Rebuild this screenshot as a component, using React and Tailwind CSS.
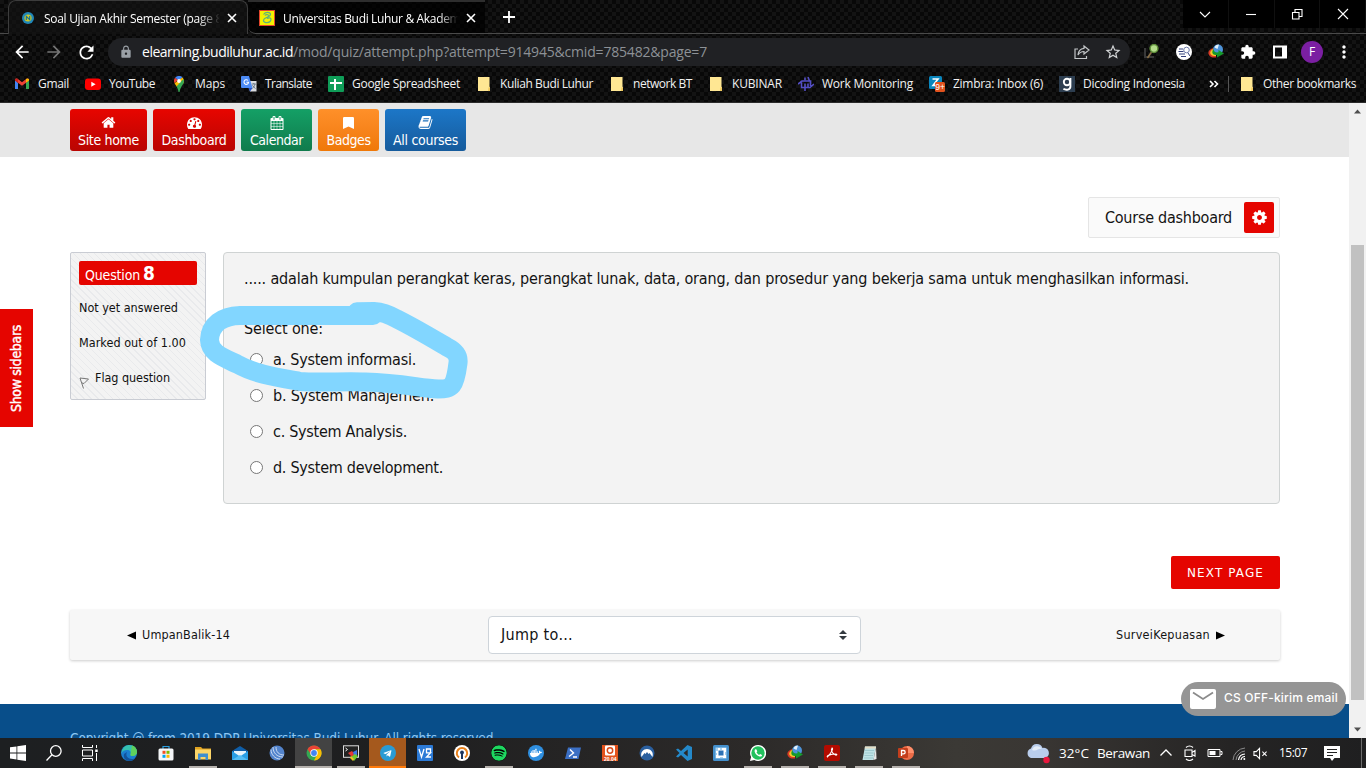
import React, { useLayoutEffect, useRef } from "react";
import { FaBookmark, FaSpotify, FaDocker, FaWhatsapp, FaTelegramPlane } from "react-icons/fa";
import { MdArrowBack, MdArrowForward, MdRefresh, MdLock, MdStarBorder, MdExtension, MdMoreVert } from "react-icons/md";

/* Single-line text whose letter spacing is adjusted so that it spans `w` pixels. */
function Fit({ w, className = "", children }) {
  const ref = useRef(null);
  useLayoutEffect(() => {
    const el = ref.current;
    el.style.letterSpacing = "0px";
    const natural = parseFloat(getComputedStyle(el).width);
    el.style.letterSpacing = `${(w - natural) / el.textContent.length}px`;
  }, [w, children]);
  return (
    <span ref={ref} className={`inline-block shrink-0 whitespace-pre ${className}`}>
      {children}
    </span>
  );
}

const UI = "font-['Open_Sans','Noto_Sans',sans-serif]";
const PAGE = "font-['DejaVu_Sans_Condensed','DejaVu_Sans',sans-serif] [font-stretch:condensed]";

/* ---------- favicons ---------- */
const Svg = ({ s = 16, vb = "0 0 16 16", className = "", children }) => (
  <svg width={s} height={s} viewBox={vb} className={`shrink-0 ${className}`} fill="none">
    {children}
  </svg>
);

const Gmail = () => (
  <Svg>
    <path d="M1 4v9h3V7z" fill="#4285f4" />
    <path d="M12 7v6h3V4z" fill="#34a853" />
    <path d="M1 4.500L8 9.800l7-5.300V3.200c-.6-1-1.800-1-2.600-.4L8 6.200 3.600 2.800C2.800 2.200 1.600 2.200 1 3.200z" fill="#ea4335" />
    <path d="M12 3.100v3.700l3-2.200V3.300c-.8-1.100-2-1.100-3-.2z" fill="#fbbc04" />
    <path d="M1 3.300v1.300l3 2.200V3.100c-1-.9-2.200-.9-3 .2z" fill="#c5221f" />
  </Svg>
);
const YouTube = () => (
  <Svg>
    <rect x="0" y="2.500" width="16" height="11.500" rx="3" fill="#f00" />
    <path d="M6.300 5.800v5l4.300-2.500z" fill="#fff" />
  </Svg>
);
const Maps = () => (
  <Svg>
    <path d="M4.200 1.800L8 5l3.500-3.800A5 5 0 0 0 4.200 1.800z" fill="#4285f4" />
    <path d="M4.200 1.800A5 5 0 0 0 3.500 7.200L7 4z" fill="#ea4335" />
    <path d="M3.500 7.200L11.500 1.400A5 5 0 0 1 13 5c0 1-.3 1.700-.6 2.400L6 11z" fill="#fbbc04" />
    <path d="M12.400 3c1 2.200.5 4-.8 5.700C10 11 9 13 8.500 16h-1C7.200 13.500 6.500 12 5.500 10.500z" fill="#34a853" />
    <circle cx="8" cy="5" r="1.900" fill="#fff" />
  </Svg>
);
const Translate = () => (
  <Svg>
    <path d="M6 5h9.500v10.500H9z" fill="#dadce0" />
    <path d="M0 1a1 1 0 0 1 1-1h7l3.500 12H1a1 1 0 0 1-1-1z" fill="#4c8bf5" />
    <path d="M7.500 12h4l-2.500 3.500z" fill="#2a56c6" />
    <path d="M7 4.500a2.300 2.300 0 1 0 .6 1.800H5.400" stroke="#fff" strokeWidth="1.100" />
    <path d="M10.800 8h4M12.800 7v1M14 8c-.4 2-1.500 3.500-2.500 4.300M11.500 9.300c.8 1.500 1.800 2.500 3 3.200" stroke="#5f6f80" strokeWidth=".9" />
  </Svg>
);
const Sheet = () => (
  <Svg>
    <rect width="16" height="16" rx="1" fill="#0f9d58" />
    <path d="M2 7h12M7 3v11" stroke="#fff" strokeWidth="2" />
  </Svg>
);
const Folder = () => (
  <Svg>
    <path d="M2 1h11.500v9.500l.5 1V15H2z" fill="#ffe793" />
    <path d="M12.500 11.500h1.500V15h-2z" fill="#efc85c" />
  </Svg>
);
const Work = () => (
  <Svg>
    <path d="M0 8l4-3h8.500v5M16 8l-4 3.500H3.500V6.500" stroke="#544fc5" strokeWidth="1.600" />
    <path d="M7 1.500v3M7 7.500V15M10 1l1.500 4M10 7.500v4" stroke="#544fc5" strokeWidth="1.600" />
  </Svg>
);
const Zimbra = () => (
  <Svg>
    <rect width="13" height="13" rx="1.500" fill="#0a86bd" />
    <path d="M3.500 3h5.500L4 9.500h3" stroke="#fff" strokeWidth="1.600" />
    <rect x="6" y="6" width="10" height="10" rx="1.500" fill="#e2521d" />
    <text x="6.200" y="14" fontSize="8.500" fontFamily="Liberation Sans" fill="#fff">9+</text>
  </Svg>
);
const Dicoding = () => (
  <Svg>
    <rect width="16" height="16" fill="#2d3e50" />
    <circle cx="8" cy="6" r="3.200" stroke="#fff" strokeWidth="1.900" />
    <path d="M11.400 2v8.500c0 3.500-4.500 4-7 2.300" stroke="#fff" strokeWidth="1.900" />
  </Svg>
);

const bookmarks = [
  [Gmail, "Gmail", 31],
  [YouTube, "YouTube", 46],
  [Maps, "Maps", 30],
  [Translate, "Translate", 47],
  [Sheet, "Google Spreadsheet", 108],
  [Folder, "Kuliah Budi Luhur", 93],
  [Folder, "network BT", 59],
  [Folder, "KUBINAR", 50],
  [Work, "Work Monitoring", 91],
  [Zimbra, "Zimbra: Inbox (6)", 90],
  [Dicoding, "Dicoding Indonesia", 102],
];

const Cross = ({ className = "" }) => (
  <Svg s={10} vb="0 0 10 10" className={className}>
    <path d="M1 1l8 8M9 1L1 9" stroke="#fff" strokeWidth="1.600" />
  </Svg>
);

const Idm = () => (
  <Svg>
    <circle cx="10" cy="5.500" r="5" fill="#4d93d9" />
    <path d="M6.500 3.500a4.500 4.500 0 0 1 4.500-3L9.500 5z" fill="#e4f1fb" />
    <path d="M5.500 4C1 5.500 0 8 .5 10c.8 2.800 4 4 7.500 3.500V11C4 11 2.500 8 5.500 4z" fill="#d83a25" />
    <path d="M5.500 4.500C2.500 6.500 1.500 8.500 2.500 10c1 1.700 3 2 5.500 2V9.500C5.500 9.500 4.500 7.500 5.500 4.500z" fill="#f5c928" />
    <path d="M5.500 5C4 7 4 9 5 10c.8.8 2 1 4 1v2.500L16 9.500 10.500 6v2.300C7.500 8.800 5.500 7.500 5.500 5z" fill="#159a2c" />
  </Svg>
);

function TabStrip() {
  return (
    <div className="flex h-[34px] items-stretch">
      <div className="w-2 border-b border-[#4a4a4a]" />
      <div className="flex w-[240px] items-center rounded-t-lg border border-b-0 border-[#3c3c3c] bg-[#141414]/60 pl-[13px]">
        <Svg s={12} vb="0 0 12 12">
          <circle cx="6" cy="6" r="6" fill="#2087b8" />
          <circle cx="6" cy="6" r="3.600" fill="#c9c72c" />
          <path d="M4.300 8V4.300l3.400 3.400V4" stroke="#147297" strokeWidth="1.100" />
        </Svg>
        <div className="-mt-px ml-[10px] w-[175px] overflow-hidden text-white [mask-image:linear-gradient(90deg,#000_88%,transparent_101%)]">
          <Fit w={178} className="text-xs">Soal Ujian Akhir Semester (page 8</Fit>
        </div>
        <Cross className="ml-[8px]" />
      </div>
      <div className="flex w-[237px] items-center rounded-bl-lg border-b border-t-2 border-[#4a4a4a] border-t-[#2e2e2e] bg-black/70 pl-[11px]">
        <Svg>
          <rect x=".5" y=".5" width="15" height="15" fill="#f4f200" stroke="#e2452c" />
          <path d="M4.500 4.500c2-3 7-2.500 7 0s-6.500 3-7 5.500 4.500 4 7 1c1.500-3-1-4-3.500-2.500M6 5.500c1-1.500 4-1 3.500.5" stroke="#5fb27a" strokeWidth="1.200" />
        </Svg>
        <div className="-mt-px ml-2 w-[175px] overflow-hidden text-white [mask-image:linear-gradient(90deg,#000_89%,transparent_100%)]">
          <Fit w={180} className="text-xs">Universitas Budi Luhur &amp; Akademi</Fit>
        </div>
        <Cross className="ml-[8px]" />
      </div>
      <div className="flex grow items-center border-b border-[#4a4a4a] pl-[18px]">
        <Svg s={12} vb="0 0 12 12">
          <path d="M6 0v12M0 6h12" stroke="#fff" strokeWidth="1.800" />
        </Svg>
      </div>
      <div className="flex w-[183px] border-b border-[#4a4a4a]">
        <div className="mb-[5px] flex grow bg-black">
          {[
            <path key="a" d="M1 4l5 5 5-5" />,
            <path key="b" d="M1 6.500h10" />,
            <path key="c" d="M1.500 4.500h6.500v6.500H1.500zM4 4V1.500h7V8.500H8.500" />,
            <path key="d" d="M1 1l10 10M11 1L1 11" />,
          ].map((p, i) => (
            <div key={i} className="flex flex-1 items-center justify-center border-r border-[#101010]">
              <Svg s={12} vb="0 0 12 12"><g stroke="#fff" strokeWidth="1.100">{p}</g></Svg>
            </div>
          ))}
        </div>
      </div>
    </div>
  );
}

function Toolbar() {
  return (
    <div className="flex h-9 items-center pl-[12px] text-white">
      <MdArrowBack className="size-5" />
      <MdArrowForward className="ml-3 size-5 text-[#757575]" />
      <MdRefresh className="ml-3 size-[21px]" />
      <div className="ml-[11px] flex h-7 w-[1022px] items-center rounded-full bg-[#202124] pl-[11px] pr-2">
        <MdLock className="size-[14px] text-[#9aa0a6]" />
        <Fit w={151} className="-mt-px ml-[9px] text-[14px]">elearning.budiluhur.ac.id</Fit>
        <Fit w={414} className="-mt-px text-[14px] text-[#8d9196]">/mod/quiz/attempt.php?attempt=914945&amp;cmid=785482&amp;page=7</Fit>
        <div className="grow" />
        <Svg className="mr-[14px]">
          <path d="M4 5H1v9.500h11.500V12M10 2l5 4-5 4V7.500C7 7.500 5.500 8.500 4 11c.3-4 2.500-6.300 6-6.700z" stroke="#c4c7c9" strokeWidth="1.200" />
        </Svg>
        <MdStarBorder className="size-[18px] text-[#d2d4d6]" />
      </div>
      <div className="ml-[14px] flex items-center gap-4">
        <Svg>
          <path d="M1 4v9h9" stroke="#393939" strokeWidth="2" />
          <path d="M3.500 14L7.500 8" stroke="#8a6f45" strokeWidth="1.600" />
          <circle cx="10" cy="4.500" r="3.900" fill="#b4dc8b" stroke="#5f8f3a" strokeWidth="1.500" />
        </Svg>
        <Svg>
          <circle cx="8" cy="8" r="8" fill="#fff" />
          <path d="M3 5h4M2.500 7.500h5M3 10h6M5 12.500h5" stroke="#33407a" strokeWidth="1.200" />
          <circle cx="10.500" cy="6" r="2.800" stroke="#6d7aa8" />
          <path d="M12 9l2 3" stroke="#33407a" />
        </Svg>
        <Idm />
        <MdExtension className="size-4" />
        <Svg>
          <path d="M2 2.500h12v11H2z" stroke="#fff" strokeWidth="2" />
          <path d="M10 2h4v12h-4z" fill="#fff" />
        </Svg>
      </div>
      <div className="ml-[13px] flex size-[22px] items-center justify-center rounded-full bg-[#7b1fa2] text-xs">F</div>
      <MdMoreVert className="ml-[11px] size-5" />
    </div>
  );
}

function Bookmarks() {
  return (
    <div className="flex h-[33px] items-center pb-[5px] pl-[14px] text-xs text-[#f1f1f1]">
      <div className="flex gap-4">
        {bookmarks.map(([Icon, label, w]) => (
          <div key={label} className="flex items-center gap-2">
            <Icon />
            <Fit w={w}>{label}</Fit>
          </div>
        ))}
      </div>
      <Svg s={10} vb="0 0 10 10" className="ml-[24px]">
        <path d="M1 2l3 3-3 3M5.500 2l3 3-3 3" stroke="#fff" strokeWidth="1.600" />
      </Svg>
      <div className="ml-[9px] h-4 w-px bg-[#555]" />
      <div className="ml-[10px] flex items-center gap-2">
        <Folder />
        <Fit w={93}>Other bookmarks</Fit>
      </div>
    </div>
  );
}

/* ---------- page ---------- */
const HOME = "M1472 992v480q0 26-19 45t-45 19h-384v-384h-256v384h-384q-26 0-45-19t-19-45v-480q0-1 .5-3t.5-3l575-474 575 474q1 2 1 6zm223-69l-62 74q-8 9-21 11h-3q-13 0-21-7l-692-577-692 577q-12 8-24 7-13-2-21-11l-62-74q-8-10-7-23.500t11-21.500l719-599q32-26 76-26t76 26l244 204v-195q0-14 9-23t23-9h192q14 0 23 9t9 23v408l219 182q10 8 11 21.500t-7 23.500z";
const DASH = "M384 1152q0-53-37.500-90.500t-90.500-37.500-90.500 37.500-37.500 90.500 37.500 90.500 90.500 37.500 90.500-37.500 37.500-90.500zm192-448q0-53-37.500-90.500t-90.500-37.500-90.500 37.500-37.500 90.500 37.500 90.500 90.500 37.500 90.500-37.500 37.500-90.500zm428 481l101-382q6-26-7.500-48.500t-38.500-29.500-48 6.500-30 39.500l-101 382q-60 5-107 43.500t-63 98.500q-20 77 20 146t117 89 146-20 89-117q16-60-6-117t-72-91zm660-33q0-53-37.500-90.500t-90.500-37.500-90.500 37.500-37.500 90.500 37.500 90.500 90.500 37.500 90.500-37.500 37.500-90.500zm-640-640q0-53-37.500-90.500t-90.500-37.500-90.500 37.500-37.500 90.500 37.500 90.500 90.500 37.500 90.500-37.500 37.500-90.500zm448 192q0-53-37.500-90.500t-90.500-37.500-90.500 37.500-37.500 90.500 37.500 90.500 90.500 37.500 90.500-37.500 37.500-90.500zm320 448q0 261-141 483-19 29-54 29h-1402q-35 0-54-29-141-221-141-483 0-182 71-348t191-286 286-191 348-71 348 71 286 191 191 286 71 348z";
const CAL = "M192 1664h288v-288h-288v288zm352 0h320v-288h-320v288zm-352-352h288v-320h-288v320zm352 0h320v-320h-320v320zm-352-384h288v-288h-288v288zm736 736h320v-288h-320v288zm-384-736h320v-288h-320v288zm768 736h288v-288h-288v288zm-384-352h320v-320h-320v320zm-352-864v-288q0-13-9.500-22.500t-22.500-9.500h-64q-13 0-22.500 9.500t-9.500 22.500v288q0 13 9.500 22.500t22.500 9.500h64q13 0 22.500-9.500t9.500-22.500zm736 864h288v-320h-288v320zm-384-384h320v-288h-320v288zm384 0h288v-288h-288v288zm32-480v-288q0-13-9.500-22.500t-22.500-9.500h-64q-13 0-22.500 9.500t-9.500 22.500v288q0 13 9.500 22.500t22.500 9.500h64q13 0 22.500-9.500t9.500-22.500zm384-64v1280q0 52-38 90t-90 38h-1408q-52 0-90-38t-38-90v-1280q0-52 38-90t90-38h128v-96q0-66 47-113t113-47h64q66 0 113 47t47 113v96h384v-96q0-66 47-113t113-47h64q66 0 113 47t47 113v96h128q52 0 90 38t38 90z";
const BOOK = "M1703 478q40 57 18 129l-275 906q-19 64-76.500 107.500t-122.500 43.500h-923q-77 0-148.500-53.500t-99.500-131.500q-24-67-2-127 0-4 3-27t4-37q1-8-3-21.500t-3-19.500q2-11 8-21t16.500-23.500 16.500-23.500q23-38 45-91.500t30-91.500q3-10 .5-30t-.5-28q3-11 17-28t17-23q21-36 42-92t25-90q1-9-2.500-32t.5-28q4-13 22-30.500t22-22.500q19-26 42.500-84.500t27.500-96.500q1-8-3-25.500t-2-26.500q2-8 9-18t18-23 17-21q8-12 16.500-30.500t15-35 16-36 19.500-32 26.500-23.500 36-11.500 47.500 5.500l-1 3q38-9 51-9h761q74 0 114 56t18 130l-274 906q-36 119-71.500 153.500t-128.500 34.500h-869q-27 0-38 15-11 16-1 43 24 70 144 70h923q29 0 56-15.500t35-41.500l300-987q7-22 5-57 38 15 59 43zm-1064 2q-4 13 2 22.500t20 9.500h608q13 0 25.500-9.500t16.500-22.500l21-64q4-13-2-22.500t-20-9.500h-608q-13 0-25.500 9.500t-16.500 22.500zm-83 256q-4 13 2 22.500t20 9.500h608q13 0 25.500-9.500t16.500-22.500l21-64q4-13-2-22.500t-20-9.500h-608q-13 0-25.500 9.500t-16.500 22.500z";
const COG = "M1152 896q0-106-75-181t-181-75-181 75-75 181 75 181 181 75 181-75 75-181zm512-109v222q0 12-8 23t-20 13l-185 28q-19 54-39 91 35 50 107 138 10 12 10 25t-9 23q-27 37-99 108t-94 71q-12 0-26-9l-138-108q-44 23-91 38-16 136-29 186-7 28-36 28h-222q-14 0-24.500-8.500t-11.500-21.500l-28-184q-49-16-90-37l-141 107q-10 9-25 9-14 0-25-11-126-114-165-168-7-10-7-23 0-12 8-23 15-21 51-66.500t54-70.500q-27-50-41-99l-183-27q-13-2-21-12.500t-8-23.500v-222q0-12 8-23t19-13l186-28q14-46 39-92-40-57-107-138-10-12-10-24 0-10 9-23 26-36 98.500-107.500t94.500-71.500q13 0 26 10l138 107q44-23 91-38 16-136 29-186 7-28 36-28h222q14 0 24.500 8.500t11.500 21.500l28 184q49 16 90 37l142-107q9-9 24-9 13 0 25 10 129 119 165 170 7 8 7 22 0 12-8 23-15 21-51 66.500t-54 70.500q26 50 41 98l183 28q13 2 21 12.500t8 23.500z";

const Glyph = ({ d, s = 16 }) => (
  <svg width={s} height={s} viewBox="0 0 1792 1792" fill="currentColor"><path d={d} /></svg>
);

const navButtons = [
  ["Site home", 61, "w-[77px] from-[#e70500] to-[#b90502]", <Glyph key="i" d={HOME} s={15} />],
  ["Dashboard", 65, "w-[82px] from-[#e70500] to-[#b90502]", <Glyph key="i" d={DASH} s={15} />],
  ["Calendar", 53, "w-[71px] from-[#14a066] to-[#107b4c]", <Glyph key="i" d={CAL} s={14} />],
  ["Badges", 44, "w-[61px] from-[#ff9029] to-[#ef7807]", <FaBookmark key="i" className="h-[12px] w-[11px]" preserveAspectRatio="none" />],
  ["All courses", 65, "w-[81px] from-[#1c77c8] to-[#165b9c]", <Glyph key="i" d={BOOK} s={15} />],
];

const options = [
  ["a. System informasi.", 143],
  ["b. System Manajemen.", 161],
  ["c. System Analysis.", 134],
  ["d. System development.", 170],
];

function QuestionInfo() {
  return (
    <div className="h-[148px] w-[136px] rounded-xs border border-[#c9ccd3] bg-[repeating-linear-gradient(45deg,#f3f3f3_0_4px,#e9eaec_4px_5px)] px-2 pt-2 text-[12.500px] text-[#111]">
      <div className="flex h-6 items-baseline rounded-xs bg-[#e50500] pl-[6px] text-white">
        <Fit w={55} className="text-[14px]">Question</Fit>
        <span className="ml-[3px] text-[19px] font-bold leading-6">8</span>
      </div>
      <div className="mt-[14px] flex h-[18px] items-center"><Fit w={99}>Not yet answered</Fit></div>
      <div className="mt-[17px] flex h-[18px] items-center"><Fit w={107}>Marked out of 1.00</Fit></div>
      <div className="mt-[17px] flex h-[18px] items-center">
        <Svg s={12} vb="0 0 12 12" className="mr-[4px] mt-[9px]">
          <path d="M1 1l3.500 10.500M1 1l8.500 1L5 6.500 3 6" stroke="#777" />
        </Svg>
        <Fit w={75}>Flag question</Fit>
      </div>
    </div>
  );
}

function QuestionBody() {
  return (
    <div className="h-[252px] w-[1057px] rounded border border-[#cfd3d3] bg-[#f3f3f3] pl-[20px] pt-[14px] text-[16px] text-[#131313]">
      <div className="flex h-[23px] items-center">
        <Fit w={945}>..... adalah kumpulan perangkat keras, perangkat lunak, data, orang, dan prosedur yang bekerja sama untuk menghasilkan informasi.</Fit>
      </div>
      <div className="mt-[27px] flex h-[23px] items-center"><Fit w={79}>Select one:</Fit></div>
      <div className="mt-[2px] flex flex-col">
        {options.map(([label, w]) => (
          <div key={label} className="flex h-9 items-center pl-[6px]">
            <span className="-mt-[2px] mr-[10px] size-[13px] rounded-full border border-[#767676] bg-white" />
            <Fit w={w}>{label}</Fit>
          </div>
        ))}
      </div>
    </div>
  );
}

function Page() {
  return (
    <div className={`relative flex h-[635px] w-[1349px] flex-col overflow-hidden bg-white ${PAGE}`}>
      <div className="flex h-[54px] shrink-0 items-start gap-[6px] bg-[#e7e7e7] pl-[70px] pt-[6px] text-white">
        {navButtons.map(([label, w, cls, icon]) => (
          <div key={label} className={`flex h-[42px] flex-col items-center rounded-[3px] bg-linear-to-b pt-[6px] ${cls}`}>
            <div className="flex h-[15px] items-center">{icon}</div>
            <Fit w={w} className="text-[14px] leading-[20px]">{label}</Fit>
          </div>
        ))}
      </div>
      <div className="ml-[70px] flex w-[1210px] flex-col">
        <div className="mt-[40px] flex h-[41px] w-[192px] items-center justify-between self-end rounded-xs border border-[#e5e5e5] bg-[#fafafa] pl-4 pr-[5px] text-[#131313]">
          <Fit w={127} className="text-[16px]">Course dashboard</Fit>
          <span className="flex h-[31px] w-[30px] items-center justify-center rounded-xs bg-[#e50500] text-white">
            <Glyph d={COG} s={17} />
          </span>
        </div>
        <div className="mt-[14px] flex justify-between">
          <QuestionInfo />
          <QuestionBody />
        </div>
        <div className="mt-[52px] flex h-[33px] w-[109px] items-center justify-center self-end rounded-xs bg-[#e50500] font-['DejaVu_Sans',sans-serif] text-[12px] text-white [font-stretch:normal]">
          <Fit w={77}>NEXT PAGE</Fit>
        </div>
        <div className="mt-[21px] flex h-[50px] items-center rounded-xs bg-[#f7f7f7] text-[12.500px] text-[#131313] shadow-[0_1px_3px_rgba(0,0,0,0.2)]">
          <div className="flex w-[418px] items-center gap-[6px] pl-[57px]">
            <Svg s={9} vb="0 0 9 9"><path d="M9 .5v8l-9-4z" fill="#000" /></Svg>
            <Fit w={88}>UmpanBalik-14</Fit>
          </div>
          <div className="flex h-[38px] w-[373px] items-center justify-between rounded border border-[#ced4da] bg-white pl-3 pr-3">
            <Fit w={72} className="text-[16px]">Jump to...</Fit>
            <Svg s={10} vb="0 0 8 10"><path d="M4 0l4 4H0zM4 10L0 6h8z" fill="#343a40" /></Svg>
          </div>
          <div className="flex grow items-center justify-end gap-[6px] pr-[55px]">
            <Fit w={94}>SurveiKepuasan</Fit>
            <Svg s={9} vb="0 0 9 9"><path d="M0 .5v8l9-4z" fill="#000" /></Svg>
          </div>
        </div>
      </div>
      <div className="mt-[44px] h-[60px] shrink-0 bg-[#084e8a] pl-[70px] pt-[24px] text-[13.500px] text-[#8cc6f3]">
        <Fit w={427}>Copyright @ from 2019 DDP Universitas Budi Luhur. All rights reserved.</Fit>
      </div>

      <div className="absolute left-0 top-[206px] flex h-[118px] w-[33px] items-center justify-center bg-[#e50500] text-white">
        <Fit w={87} className="-rotate-90 text-[14px] [-webkit-text-stroke:0.4px_#fff]">Show sidebars</Fit>
      </div>
      <div className="absolute left-[1181px] top-[579px] flex h-[34px] w-[165px] items-center rounded-full bg-[#959595] pl-[9px] text-white">
        <Svg s={26} vb="0 0 26 26">
          <rect x="0" y="3" width="26" height="20" rx="2" fill="#fff" />
          <path d="M3 6.500l10 6.500 10-6.500" stroke="#8b8b8b" strokeWidth="1.800" />
        </Svg>
        <Fit w={114} className="-mt-[2px] ml-[8px] font-['Inter',sans-serif] text-[12px] font-medium">CS OFF-kirim email</Fit>
      </div>
      <svg className="absolute left-[190px] top-[187px]" width="290" height="120" viewBox="190 290 290 120" fill="none">
        <path
          d="M373 315.500H240C222 316 210 325 209.500 340C210 353 222 357 238 364.500C255 374 275 377 300 381.500C320 383 345 381 365 382C400 383 420 388 438 389C452 389 455 387 458 363C459 355 455 351 447 347C430 337 415 328 397 319C388 314 382 312 374 311.500L357 311.800"
          stroke="#82d6ff" strokeWidth="19" strokeLinecap="round" strokeLinejoin="round"
        />
      </svg>
    </div>
  );
}

function Scrollbar() {
  return (
    <div className="flex h-[635px] w-[17px] flex-col items-center bg-[#f1f1f1]">
      <div className="flex h-[17px] items-center"><Svg s={7} vb="0 0 7 4"><path d="M3.500 0L7 4H0z" fill="#505050" /></Svg></div>
      <div className="mt-[125px] h-[455px] w-[13px] bg-[#c1c1c1]" />
      <div className="mt-auto flex h-[17px] items-center"><Svg s={7} vb="0 0 7 4"><path d="M3.500 4L0 0h7z" fill="#505050" /></Svg></div>
    </div>
  );
}

/* ---------- taskbar ---------- */
const Round = ({ className, children }) => (
  <span className={`flex size-4 items-center justify-center rounded-full ${className}`}>{children}</span>
);

const apps = [
  ["edge", <Svg key="i">
    <circle cx="8" cy="8" r="8" fill="#1b7fd0" />
    <path d="M1 6C2 2 5 0 8.500 0 13 0 16 3.300 16 7c0 2.500-2 4-4.500 4-1.500 0-2.500-.6-2-1.500C10.500 7 9 5 6 5 3.500 5 1.500 6 0 8.500z" fill="#35c1b0" />
    <path d="M11 .5C14.500 1.500 16 4.500 16 7c0 2.500-2 4-4.500 4-1.500 0-2.500-.6-2-1.500z" fill="#5fd15c" />
    <path d="M6 7c-2 4 1 7 5 7 1.500 0 3-.7 3.500-1.500C13 15 11 16 8.500 16 4 16 2 12 3 9z" fill="#12539c" />
  </Svg>],
  ["store", <Svg key="i">
    <path d="M5 4V1.500h6V4" stroke="#2a9fe0" strokeWidth="1.200" />
    <rect x=".5" y="3.500" width="15" height="12" rx="1.500" fill="#f4f6f8" />
    <path d="M4.500 5.800h3v3h-3z" fill="#f25022" /><path d="M8.500 5.800h3v3h-3z" fill="#7fba00" />
    <path d="M4.500 9.800h3v3h-3z" fill="#00a4ef" /><path d="M8.500 9.800h3v3h-3z" fill="#ffb900" />
  </Svg>],
  ["files", <Svg key="i">
    <path d="M0 2h6l1.500 1.500H16V6H0z" fill="#e0a320" />
    <path d="M0 4.500h16v10H0z" fill="#fcd568" />
    <path d="M3 8.500h10V15h-2.500v-3h-5v3H3z" fill="#3f8ed0" />
  </Svg>, true],
  ["mail", <Svg key="i">
    <path d="M0 6l8-5 8 5v9H0z" fill="#0f5ea8" />
    <path d="M2 6h12v5H2z" fill="#e9f4fc" />
    <path d="M0 6l8 5.500L16 6v9H0z" fill="#2a9fe6" />
    <path d="M0 15l8-5 8 5z" fill="#54bdf4" />
  </Svg>],
  ["navicat", <Svg key="i">
    <circle cx="8" cy="8" r="7.500" fill="#5384cc" />
    <path d="M4 2c0 6 4 10 10 10M7 2c0 5 3 8 8 8M2 4.500c0 5 4 9.500 9 9.500" stroke="#d9e5f6" strokeWidth=".9" />
  </Svg>],
  ["chrome", <Svg key="i">
    <circle cx="8" cy="8" r="7.500" fill="#34a853" />
    <path d="M1.500 4.300A7.500 7.500 0 0 1 14.500 4.300H8L5 9.500z" fill="#ea4335" />
    <path d="M14.600 4.300A7.500 7.500 0 0 1 8 15.500L11.200 9.500 8 4.300z" fill="#fbbc04" />
    <circle cx="8" cy="8" r="3.700" fill="#fff" /><circle cx="8" cy="8" r="2.900" fill="#4285f4" />
  </Svg>, true],
  ["terminal", <Svg key="i">
    <rect x=".5" y=".8" width="15" height="11.500" fill="#222" stroke="#ddd" />
    <path d="M2.500 3l2 1.500-2 1.500" stroke="#eee" />
    <path d="M5 8l4-2 3 4-3 2z" fill="#e33a35" /><path d="M10 7l4-2v5l-3 1z" fill="#3c77e8" /><path d="M8 12l4-3 3 2-4 5z" fill="#6ecb31" />
    <path d="M8 11l3 3-1 2-3-3z" fill="#f2bf24" />
  </Svg>, true],
  ["telegram", <Round key="i" className="bg-[#2a9bd4]"><FaTelegramPlane className="size-[9px] text-white" /></Round>, true],
  ["vnc", <Svg key="i"><rect width="16" height="16" rx="1" fill="#2c7ad6" /><path d="M2 4l2.500 8L7 4M13.500 7.800V4H9.500v3.800h4L9.500 12H14" stroke="#fff" strokeWidth="1.300" /></Svg>],
  ["openvpn", <Svg key="i"><circle cx="8" cy="8" r="8" fill="#fff" /><path d="M5 12.500a5.200 5.200 0 1 1 6 0" stroke="#e8811b" strokeWidth="2" /><circle cx="8" cy="7.500" r="1.900" fill="#1c355e" /><path d="M7 8h2v6H7z" fill="#1c355e" /></Svg>],
  ["spotify", <FaSpotify key="i" className="size-4 rounded-full bg-black text-[#1ed760]" />, true],
  ["docker", <Round key="i" className="bg-[#2f8fe0]"><FaDocker className="size-[12px] text-white" /></Round>],
  ["powershell", <Svg key="i"><path d="M3 2.500h13L13.500 14H0z" fill="#3b6fc4" /><path d="M5 4.500l3.500 3.500L4 11.500M8 12h4" stroke="#fff" strokeWidth="1.400" /></Svg>],
  ["ubuntu", <Svg key="i"><rect width="16" height="16" fill="#e4531d" /><rect x="3" y=".5" width="10" height="10" rx="1" fill="#fff" /><circle cx="8" cy="5.500" r="2.700" stroke="#d94a1b" strokeWidth="1.500" /><text x="2" y="15.800" fontSize="5" fontWeight="bold" fontFamily="Liberation Sans" fill="#fff">20.04</text></Svg>],
  ["nord", <Svg key="i"><circle cx="8" cy="8" r="7.500" fill="#2a5f9f" /><path d="M2.500 12C1 7 4.500 4 8 4s7 3 5.500 8l-3-4-1 1L8 7 6.500 9l-1-1z" fill="#fff" /></Svg>],
  ["vscode", <Svg key="i"><path d="M11.500 0L16 2v12l-4.500 2L5 10l-3 2.500L0 11.500 3.500 8 0 4.500 2 3.500 5 6zM11.700 4.500L7.500 8l4.200 3.500z" fill="#2489ca" fillRule="evenodd" /></Svg>],
  ["utility", <Svg key="i"><rect width="16" height="16" rx="1.500" fill="#4490cd" /><rect x="2.500" y="2.500" width="11" height="11" fill="#a9d3f2" /><path d="M3 6h2V3h2v2h2V3h4v4h-1v3h1v3h-3v-1H7v1H3v-3h1V8H3z" fill="#fff" /><rect x="5.500" y="5.500" width="5" height="5" fill="#2b71b5" /></Svg>],
  ["whatsapp", <Svg key="i"><path d="M8 0a8 8 0 1 1-3.700 15L0 16l1.100-4A8 8 0 0 1 8 0z" fill="#fff" /><circle cx="8" cy="8" r="6.700" fill="#22c15e" /><path d="M5.300 4.200c-1.500 1.500-.3 4 1.300 5.500s4 2.700 5.200 1.200l.2-1-1.900-1-1 1C8 9.500 7 8.500 6.500 7.300l.8-.9-.8-2z" fill="#fff" /></Svg>, true],
  ["idm", <Idm key="i" />, true],
  ["acrobat", <Svg key="i"><rect width="16" height="16" rx="2" fill="#b30b00" /><path d="M8 3c1.500 0 0 4-4.500 9-1.500-1 3-3 8-3 2 0 1.500 1.500 0 1C8.500 9 6.500 5 8 3z" stroke="#fff" strokeWidth="1.100" /></Svg>, true],
  ["notepad", <Svg key="i"><path d="M4 1.500h11L12.500 15H1.500z" fill="#bfe3e6" /><path d="M4 1.500h11v2H3.700z" fill="#e4ddc5" /><path d="M4 5.500h9M3.500 8h9M3.500 10.500h8.500M3 13h9" stroke="#8fbfc4" strokeWidth=".7" /><path d="M15 2l.5 12-3 1z" fill="#e8e8e8" /></Svg>, true],
  ["powerpoint", <Svg key="i"><circle cx="9" cy="8" r="7" fill="#ed6c47" /><path d="M9 1a7 7 0 0 1 7 7H9z" fill="#ff8f6b" /><rect x="0" y="3" width="10" height="10" rx="1" fill="#c43e1c" /><path d="M3.500 11V5.500h2a1.600 1.600 0 0 1 0 3.300h-2" stroke="#fff" strokeWidth="1.300" /></Svg>, true],
];

function Taskbar() {
  return (
    <div className={`flex h-[30px] items-center bg-[linear-gradient(90deg,#1d1f21_0%,#1f1f20_30%,#2c2a29_55%,#3b3935_70%,#393633_76%,#252424_90%,#1f1f20_100%)] text-white ${UI}`}>
      <div className="flex w-9 justify-center">
        <Svg><path d="M0 2.300l6.500-.9v6.100H0zM7.300 1.300L16 0v7.500H7.300zM0 8.400h6.500v6.100L0 13.600zM7.300 8.400H16V16l-8.700-1.300z" fill="#fff" /></Svg>
      </div>
      <div className="flex w-9 justify-center">
        <Svg><circle cx="9.800" cy="6" r="5.300" stroke="#fff" strokeWidth="1.300" /><path d="M6 9.800L.5 15.500" stroke="#fff" strokeWidth="1.300" /></Svg>
      </div>
      <div className="flex w-9 justify-center">
        <Svg><path d="M.5 0v2.500h10V0M.5 5h10v6H.5zM.5 16v-2.500h10V16M14.500 0v3M14.500 8v8" stroke="#fff" /><path d="M13.200 4.500h2.500V7h-2.500z" fill="#fff" /></Svg>
      </div>
      <div className="ml-[2px] flex h-full">
        {apps.map(([name, icon, open]) => (
          <div
            key={name}
            className={`flex h-full w-[37px] flex-col items-center justify-between ${name === "telegram" ? "bg-[#a5591d]" : name === "chrome" ? "bg-[#434343]" : ""}`}
          >
            <div className="flex h-[27px] items-center pt-[3px]">{icon}</div>
            <div className={`h-[2px] ${name === "telegram" ? "w-full bg-[#ff7a0a]" : name === "chrome" ? "w-full bg-[#b5b1ad]" : open ? "w-7 bg-[#b5b1ad]" : ""}`} />
          </div>
        ))}
      </div>
      <svg width="24" height="22" viewBox="0 0 24 22" className="ml-[102px] shrink-0">
        <path d="M5 16a5 5 0 0 1 0-9.500A6 6 0 0 1 16.500 6 5 5 0 0 1 19 16z" fill="#b9cdec" />
        <path d="M6 8a5.500 5.500 0 0 1 10-1c-4-1-5 3-10 1z" fill="#e4edf9" />
        <circle cx="20.500" cy="18" r="3.200" fill="#e8173d" />
      </svg>
      <Fit w={30} className="ml-[9px] text-[13.500px]">32°C</Fit>
      <Fit w={53} className="ml-[8px] text-[13.500px]">Berawan</Fit>
      <Svg s={12} vb="0 0 12 12" className="ml-[10px]"><path d="M.5 8.500L6 3l5.500 5.500" stroke="#fff" strokeWidth="1.300" /></Svg>
      <Svg s={16} className="ml-[10px]"><path d="M3 5h7v6.500H3zM10 7.500l3-2V11L10 9.500M4 2.500c2-2 5-2 7 0M4 14c2 2 5 2 7 0" stroke="#fff" strokeWidth="1.100" /></Svg>
      <Svg s={16} className="ml-[9px]"><path d="M1 4.500h12v7H1zM13.500 6.500h1.500v3h-1.500" stroke="#fff" /><path d="M2.500 6h6v4h-6z" fill="#fff" /></Svg>
      <Svg s={14} vb="0 0 14 14" className="ml-[9px]">
        <path d="M1 14A13 13 0 0 1 13 2M4 14A10 10 0 0 1 13 5" stroke="#8b8b8b" /><path d="M6.500 14A7 7 0 0 1 13 8M9 14a4 4 0 0 1 4-3.500" stroke="#fff" strokeWidth="1.200" /><circle cx="12.300" cy="13" r="1" fill="#fff" />
      </Svg>
      <Svg s={15} className="ml-[7px]"><path d="M1 6h2.500L7 2.500v11L3.500 10H1zM10 6l4.500 4.500M14.500 6L10 10.500" stroke="#fff" strokeWidth="1.100" /></Svg>
      <Fit w={28} className="ml-[11px] text-[12px]">15:07</Fit>
      <Svg s={16} className="ml-[17px]"><path d="M0 1h16v12h-5.500L8 16l-2-3H0z" fill="#fff" /><path d="M3 4.500h10M3 7.500h10M3 10.500h6" stroke="#222" /></Svg>
      <div className="ml-auto mr-[4px] h-full w-px bg-[#6b6b6b]" />
    </div>
  );
}

export default function App() {
  return (
    <div className="flex h-[768px] w-[1366px] flex-col overflow-hidden bg-white">
      <div className={`h-[103px] border-b border-[#2b2b2b] bg-[#0b0b0b] bg-[repeating-conic-gradient(#080808_0_25%,#131313_0_50%)] bg-[length:8px_8px] ${UI}`}>
        <TabStrip />
        <Toolbar />
        <Bookmarks />
      </div>
      <div className="flex h-[635px]">
        <Page />
        <Scrollbar />
      </div>
      <Taskbar />
    </div>
  );
}
